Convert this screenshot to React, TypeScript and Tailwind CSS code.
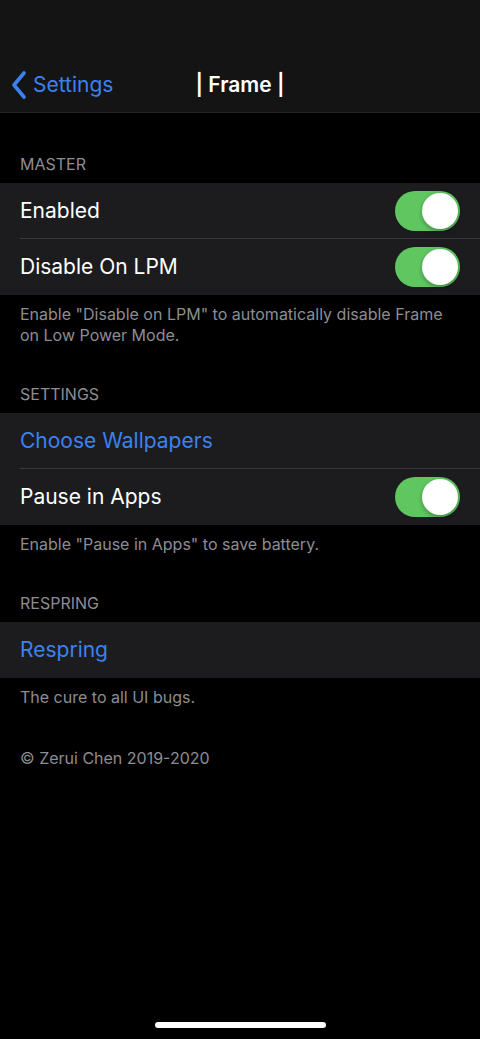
import React from "react";

function Toggle() {
  return (
    <div className="w-[65px] h-[40px] rounded-full bg-[#5fc660] relative flex items-center">
      <div className="absolute right-[2px] top-[2px] w-[36px] h-[36px] rounded-full bg-white shadow-[0_2px_4px_rgba(0,0,0,0.3)]" />
    </div>
  );
}

function Row({ label, blue, toggle, sep }: { label: string; blue?: boolean; toggle?: boolean; sep?: boolean }) {
  return (
    <div className="h-[56px] flex items-center pl-[20px] relative">
      <div className={`flex-1 h-full flex items-center pr-[20px] ${sep ? "border-b border-[#38383b]" : ""}`}>
        <span className={`flex-1 text-[21px] ${blue ? "text-[#3b82ef]" : "text-white"}`}>{label}</span>
        {toggle && <Toggle />}
      </div>
    </div>
  );
}

function Header({ children }: { children: React.ReactNode }) {
  return <div className="px-[20px] text-[16px] text-[#8d8d93] uppercase leading-none">{children}</div>;
}

function Footer({ children }: { children: React.ReactNode }) {
  return <div className="px-[20px] text-[16px] leading-[21px] text-[#8d8d93]">{children}</div>;
}

export default function App() {
  return (
    <div className="w-[480px] h-[1039px] bg-black flex flex-col relative overflow-hidden" style={{ fontFamily: "Inter, 'Noto Sans', sans-serif" }}>
      <div className="h-[113px] bg-[#141414] border-b border-[#262626] flex items-end pb-[11px] relative">
        <div className="flex items-center pl-[10px] text-[#3b82ef] h-[32px]">
          <svg width="18" height="30" viewBox="0 0 18 30" fill="none">
            <path d="M14 3 L4 15 L14 27" stroke="#3b82ef" strokeWidth="3.6" strokeLinecap="round" strokeLinejoin="round" />
          </svg>
          <span className="ml-[5px] text-[21px]">Settings</span>
        </div>
        <div className="absolute left-0 right-0 bottom-[11px] h-[32px] flex items-center justify-center pointer-events-none">
          <span className="text-white text-[21px] font-semibold">| Frame |</span>
        </div>
      </div>

      <div className="h-[43px]" />
      <Header>Master</Header>
      <div className="h-[11px]" />
      <div className="bg-[#1c1c1e]">
        <Row label="Enabled" toggle sep />
        <Row label="Disable On LPM" toggle />
      </div>
      <div className="h-[9px]" />
      <Footer>Enable "Disable on LPM" to automatically disable Frame on Low Power Mode.</Footer>

      <div className="h-[40px]" />
      <Header>Settings</Header>
      <div className="h-[11px]" />
      <div className="bg-[#1c1c1e]">
        <Row label="Choose Wallpapers" blue sep />
        <Row label="Pause in Apps" toggle />
      </div>
      <div className="h-[9px]" />
      <Footer>Enable "Pause in Apps" to save battery.</Footer>

      <div className="h-[40px]" />
      <Header>Respring</Header>
      <div className="h-[11px]" />
      <div className="bg-[#1c1c1e]">
        <Row label="Respring" blue />
      </div>
      <div className="h-[9px]" />
      <Footer>The cure to all UI bugs.</Footer>
      <div className="h-[40px]" />
      <Footer>© Zerui Chen 2019-2020</Footer>

      <div className="absolute left-[155px] bottom-[11px] w-[171px] h-[6px] rounded-full bg-white" />
    </div>
  );
}
